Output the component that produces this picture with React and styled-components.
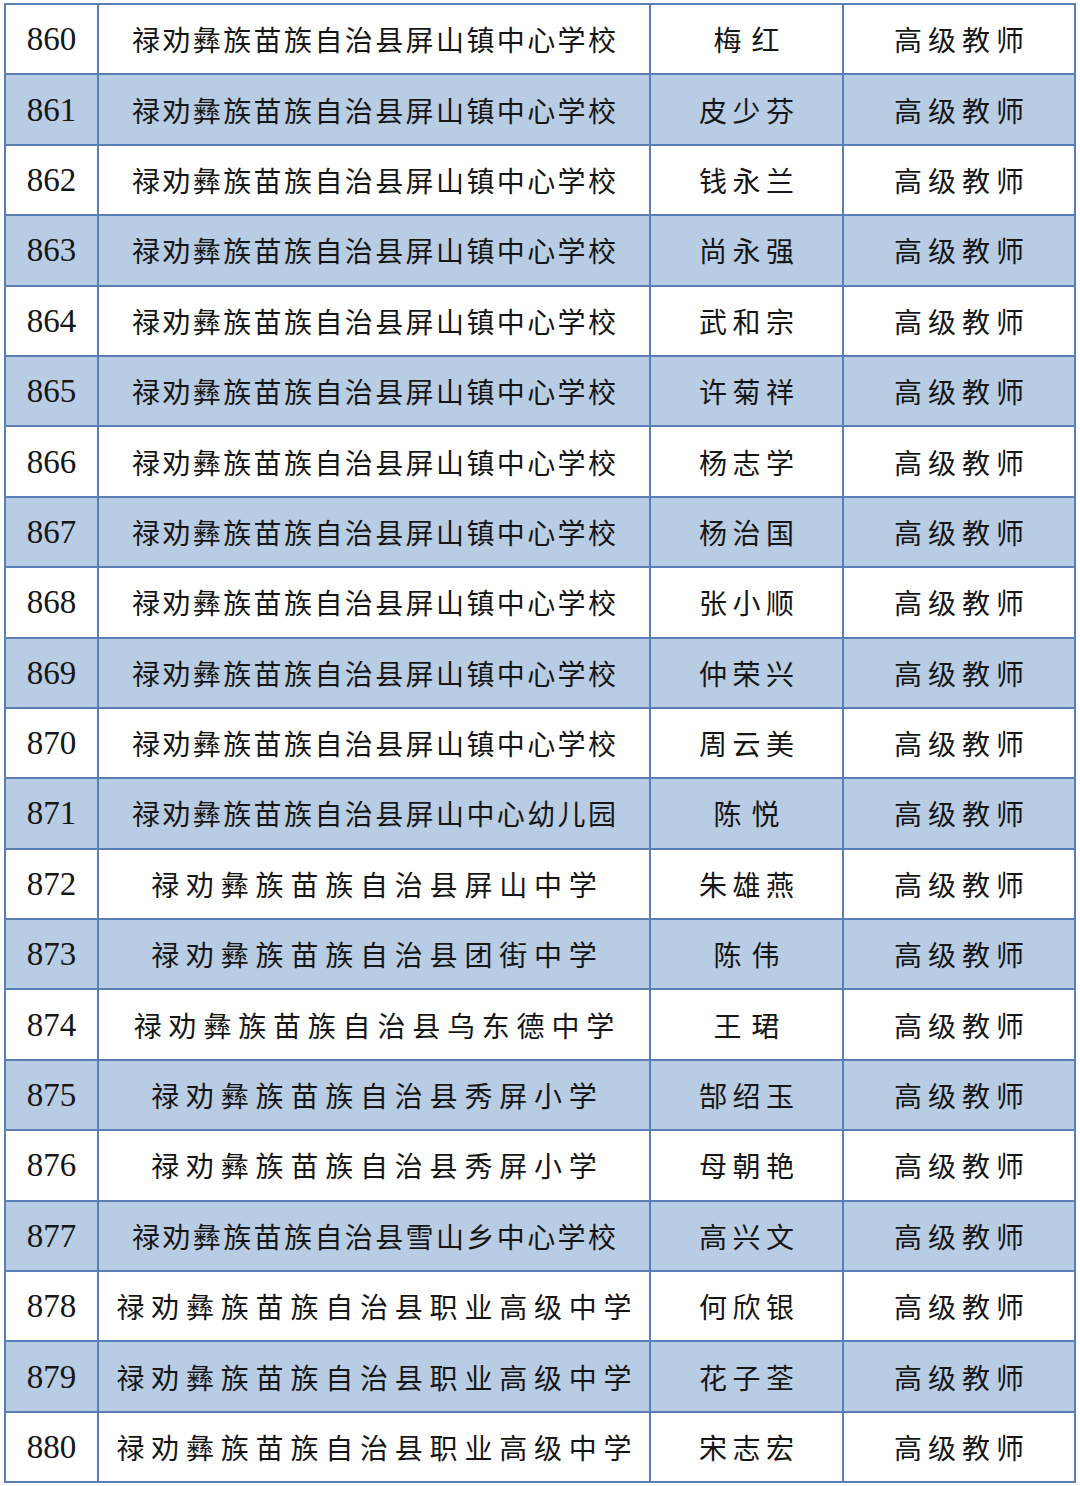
import React from "react";
import styled, { createGlobalStyle } from "styled-components";

const Global = createGlobalStyle`
  html, body { margin: 0; padding: 0; background: #ffffff; }
  body { font-family: "Noto Sans CJK SC", "Noto Sans", sans-serif; }
`;

const Page = styled.div`
  padding: 3px 0 0 4px;
  background: #ffffff;
`;

const Table = styled.div`
  width: 1072px;
  box-sizing: border-box;
  display: grid;
  grid-template-columns: 93px 552px 193px 232px;
  grid-auto-rows: 70.4px;
  border-top: 2px solid #5a7fb6;
  border-left: 2px solid #5a7fb6;
`;

const Cell = styled.div`
  box-sizing: border-box;
  border-right: 2px solid #5a7fb6;
  border-bottom: 2px solid #5a7fb6;
  background: ${(p) => (p.$shaded ? "#b8cce4" : "#ffffff")};
  display: flex;
  align-items: center;
  justify-content: center;
  color: #161616;
  white-space: nowrap;
  overflow: hidden;
`;

const Num = styled.span`
  font-family: "Liberation Serif", "Times New Roman", Times, "Noto Serif",
    "DejaVu Serif", FreeSerif, serif;
  font-size: 33px;
  line-height: 1;
  padding-top: 1px;
`;

const Label = styled.span`
  font-family: "Noto Sans CJK SC", sans-serif;
  font-size: 28px;
  line-height: 1;
  letter-spacing: ${(p) => p.$spacing}px;
  padding-left: ${(p) => p.$spacing}px;
`;

const rows = [
  [860, "禄劝彝族苗族自治县屏山镇中心学校", "梅红"],
  [861, "禄劝彝族苗族自治县屏山镇中心学校", "皮少芬"],
  [862, "禄劝彝族苗族自治县屏山镇中心学校", "钱永兰"],
  [863, "禄劝彝族苗族自治县屏山镇中心学校", "尚永强"],
  [864, "禄劝彝族苗族自治县屏山镇中心学校", "武和宗"],
  [865, "禄劝彝族苗族自治县屏山镇中心学校", "许菊祥"],
  [866, "禄劝彝族苗族自治县屏山镇中心学校", "杨志学"],
  [867, "禄劝彝族苗族自治县屏山镇中心学校", "杨治国"],
  [868, "禄劝彝族苗族自治县屏山镇中心学校", "张小顺"],
  [869, "禄劝彝族苗族自治县屏山镇中心学校", "仲荣兴"],
  [870, "禄劝彝族苗族自治县屏山镇中心学校", "周云美"],
  [871, "禄劝彝族苗族自治县屏山中心幼儿园", "陈悦"],
  [872, "禄劝彝族苗族自治县屏山中学", "朱雄燕"],
  [873, "禄劝彝族苗族自治县团街中学", "陈伟"],
  [874, "禄劝彝族苗族自治县乌东德中学", "王珺"],
  [875, "禄劝彝族苗族自治县秀屏小学", "郜绍玉"],
  [876, "禄劝彝族苗族自治县秀屏小学", "母朝艳"],
  [877, "禄劝彝族苗族自治县雪山乡中心学校", "高兴文"],
  [878, "禄劝彝族苗族自治县职业高级中学", "何欣银"],
  [879, "禄劝彝族苗族自治县职业高级中学", "花子荃"],
  [880, "禄劝彝族苗族自治县职业高级中学", "宋志宏"],
];

function schoolSpacing(name) {
  return name.length >= 16 ? 2.4 : 6.8;
}

function nameSpacing(name) {
  return name.length === 2 ? 10 : 5.5;
}

export default function App() {
  return (
    <Page>
      <Global />
      <Table>
        {rows.map(([num, school, person], i) => {
          const shaded = i % 2 === 1;
          return (
            <React.Fragment key={num}>
              <Cell $shaded={shaded}>
                <Num>{num}</Num>
              </Cell>
              <Cell $shaded={shaded}>
                <Label $spacing={schoolSpacing(school)}>{school}</Label>
              </Cell>
              <Cell $shaded={shaded}>
                <Label $spacing={nameSpacing(person)}>{person}</Label>
              </Cell>
              <Cell $shaded={shaded}>
                <Label $spacing={6}>高级教师</Label>
              </Cell>
            </React.Fragment>
          );
        })}
      </Table>
    </Page>
  );
}
